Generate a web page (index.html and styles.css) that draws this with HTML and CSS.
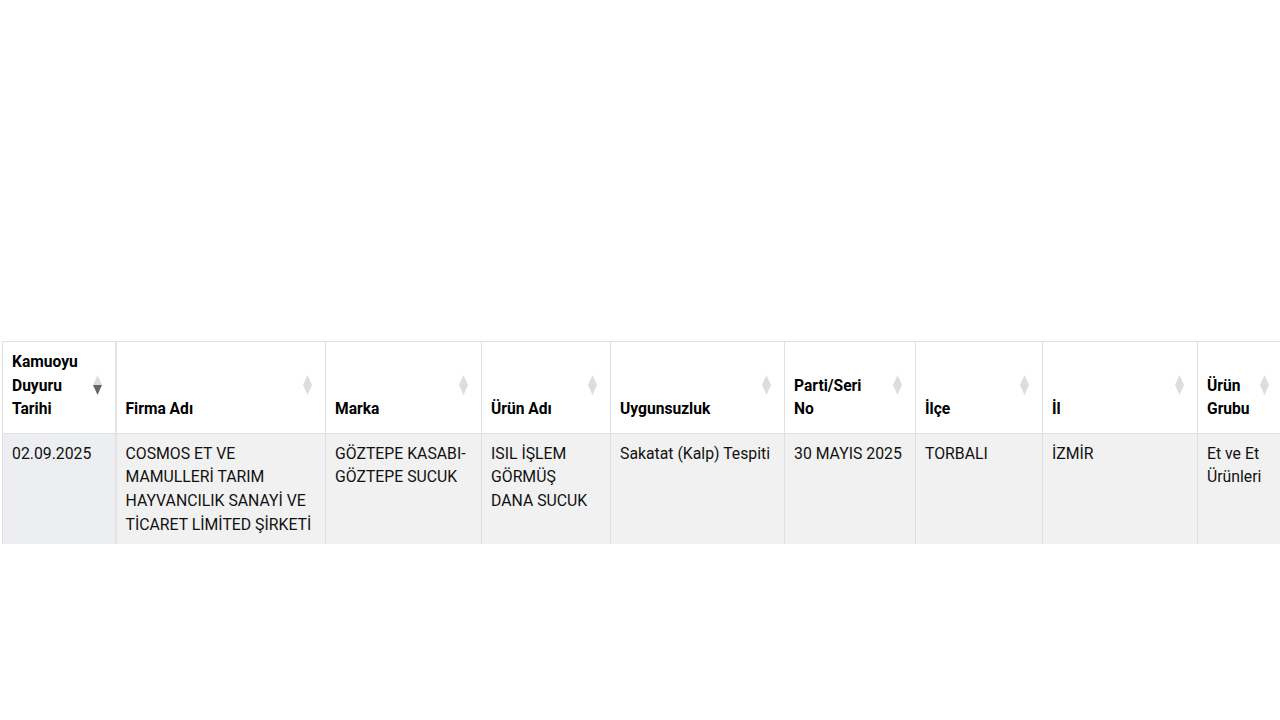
FILE: index.html
```html
<!DOCTYPE html>
<html lang="tr">
<head>
<meta charset="utf-8">
<title>Kamuoyu Duyuruları</title>
<link rel="stylesheet" href="styles.css">
</head>
<body>
<div class="page">
  <div class="table-wrap">
    <table class="grid">
      <colgroup>
        <col class="c1"><col class="c2"><col class="c3"><col class="c4"><col class="c5"><col class="c6"><col class="c7"><col class="c8"><col class="c9">
      </colgroup>
      <thead>
        <tr>
          <th class="sorted">Kamuoyu Duyuru Tarihi<svg class="sort" viewBox="0 0 10 22"><polygon class="up" points="5,0 10,11 0,11"/><polygon class="down on" points="0,11 10,11 5,22"/></svg></th>
          <th>Firma Adı<svg class="sort" viewBox="0 0 10 22"><polygon class="up" points="5,0 10,11 0,11"/><polygon class="down" points="0,11 10,11 5,22"/></svg></th>
          <th>Marka<svg class="sort" viewBox="0 0 10 22"><polygon class="up" points="5,0 10,11 0,11"/><polygon class="down" points="0,11 10,11 5,22"/></svg></th>
          <th>Ürün Adı<svg class="sort" viewBox="0 0 10 22"><polygon class="up" points="5,0 10,11 0,11"/><polygon class="down" points="0,11 10,11 5,22"/></svg></th>
          <th>Uygunsuzluk<svg class="sort" viewBox="0 0 10 22"><polygon class="up" points="5,0 10,11 0,11"/><polygon class="down" points="0,11 10,11 5,22"/></svg></th>
          <th>Parti/Seri No<svg class="sort" viewBox="0 0 10 22"><polygon class="up" points="5,0 10,11 0,11"/><polygon class="down" points="0,11 10,11 5,22"/></svg></th>
          <th>İlçe<svg class="sort" viewBox="0 0 10 22"><polygon class="up" points="5,0 10,11 0,11"/><polygon class="down" points="0,11 10,11 5,22"/></svg></th>
          <th>İl<svg class="sort" viewBox="0 0 10 22"><polygon class="up" points="5,0 10,11 0,11"/><polygon class="down" points="0,11 10,11 5,22"/></svg></th>
          <th>Ürün Grubu<svg class="sort" viewBox="0 0 10 22"><polygon class="up" points="5,0 10,11 0,11"/><polygon class="down" points="0,11 10,11 5,22"/></svg></th>
        </tr>
      </thead>
      <tbody>
        <tr>
          <td class="sorted">02.09.2025</td>
          <td>COSMOS ET VE MAMULLERİ TARIM HAYVANCILIK SANAYİ VE TİCARET LİMİTED ŞİRKETİ</td>
          <td>GÖZTEPE KASABI-GÖZTEPE SUCUK</td>
          <td>ISIL İŞLEM GÖRMÜŞ DANA SUCUK</td>
          <td>Sakatat (Kalp) Tespiti</td>
          <td>30 MAYIS 2025</td>
          <td>TORBALI</td>
          <td>İZMİR</td>
          <td>Et ve Et Ürünleri</td>
        </tr>
      </tbody>
    </table>
  </div>
</div>
</body>
</html>
```

FILE: styles.css
```css
html, body {
  margin: 0;
  padding: 0;
  overflow: hidden;
  background: #ffffff;
}

.page {
  width: 1280px;
  height: 720px;
  padding-top: 341px;
  padding-left: 2px;
  box-sizing: border-box;
}

.table-wrap {
  height: 203px;
  overflow: hidden;
  width: 1300px;
}

.grid {
  border-collapse: collapse;
  table-layout: fixed;
  width: 1280px;
  font-family: Roboto, "Noto Sans", Arial, sans-serif;
  font-size: 15.8px;
  line-height: 23.6px;
  color: #111111;
}

.c1 { width: 113px; }
.c2 { width: 210px; }
.c3 { width: 156px; }
.c4 { width: 129px; }
.c5 { width: 174px; }
.c6 { width: 131px; }
.c7 { width: 127px; }
.c8 { width: 155px; }
.c9 { width: 85px; }

.grid th,
.grid td {
  border: 1px solid #e0e0e0;
  text-align: left;
}

.grid th {
  position: relative;
  background: #ffffff;
  font-weight: 700;
  font-size: 15.6px;
  vertical-align: bottom;
  padding: 9px 30px 11px 9px;
  color: #000000;
}

.grid th:first-child,
.grid td:first-child {
  border-right: 2px solid #e4e4e6;
}

.grid td {
  background: #f1f1f1;
  vertical-align: top;
  padding: 8px 12px 20px 9px;
  height: 160px;
}

.grid td.sorted {
  background: #eceef1;
}

.sort {
  position: absolute;
  right: 13px;
  top: 50%;
  width: 9px;
  height: 22px;
  margin-top: -13px;
}

.sort polygon {
  fill: #dddddd;
}

.sort polygon.on {
  fill: #666666;
}
```
